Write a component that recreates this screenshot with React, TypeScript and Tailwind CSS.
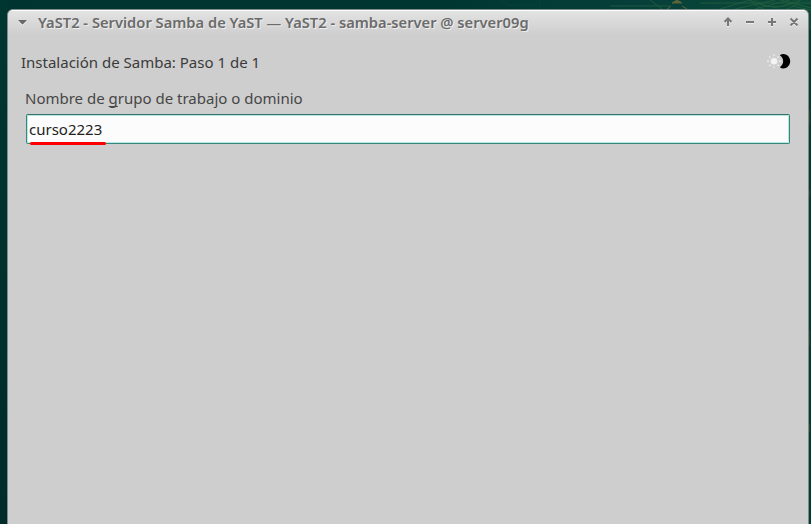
function Wallpaper() {
  return (
    <svg className="absolute inset-0" width="811" height="524" viewBox="0 0 811 524" fill="none">
      <defs>
        <linearGradient id="desk" x1="0" x2="1" y1="0" y2="0">
          <stop offset="0" stopColor="#003430" />
          <stop offset="0.55" stopColor="#003632" />
          <stop offset="0.8" stopColor="#06403a" />
          <stop offset="1" stopColor="#0b4a37" />
        </linearGradient>
        <linearGradient id="side" x1="0" x2="0" y1="0" y2="1">
          <stop offset="0" stopColor="#003632" />
          <stop offset="1" stopColor="#002b29" />
        </linearGradient>
      </defs>
      <rect width="811" height="524" fill="url(#desk)" />
      <rect width="8" height="524" fill="url(#side)" />
      <rect x="808" y="30" width="3" height="494" fill="#043c31" />
      <g stroke="#2a6542" strokeWidth="1" opacity="0.7">
        <circle cx="775" cy="-25" r="32" />
        <circle cx="775" cy="-25" r="36" />
        <circle cx="775" cy="-40" r="47" />
        <path d="M610 6h60M650 0l12 9M720 9l30-9M735 9l40-9M755 9l35-9M780 0l31 8M700 3h111M792 6l19 4" />
      </g>
      <path d="M500 0l8 5h32M540 0v9" stroke="#0b4a3f" opacity="0.5" />
      <path d="M672 3l5-3l5 3zM667 9l4-3M682 6l5 3" fill="#5c6338" stroke="#5b6338" strokeWidth="1" />
      <path d="M809.500 110v14M809.500 190v6M809.500 330v16M809.500 424v8" stroke="#1b4a31" />
    </svg>
  );
}

function TitleBar() {
  return (
    <header className="flex h-[24px] items-center bg-linear-to-b from-[#e3e3e3] to-[#cecece] pl-2.5 pr-[9px]">
      <svg width="9" height="6" viewBox="0 0 9 6" className="shrink-0">
        <path d="M0 1h9L4.500 6z" fill="#f1f1f1" />
        <path d="M0 0h9L4.500 4.700z" fill="#666a68" />
      </svg>
      <h1 className="mb-[2px] ml-[11px] grow whitespace-pre text-[14.700px] leading-[22px] font-semibold text-[#6b6b6b] [text-shadow:1px_1px_0_#eeeeee]">
        YaST2 - Servidor Samba de YaST — YaST2 - samba-server @ server09g
      </h1>
      <svg width="76" height="12" viewBox="0 0 76 12" fill="none" className="mb-[2px] shrink-0" strokeWidth="2">
        <g stroke="#eeeeee" transform="translate(0 1)">
          <path d="M5 10V3M1.500 6L5 2.500L8.500 6M23 6h8M45 6h8M49 2v8M67.500 2.500l7 7M74.500 2.500l-7 7" />
        </g>
        <path d="M5 10V3M1.500 6L5 2.500L8.500 6M23 6h8M45 6h8M49 2v8M67.500 2.500l7 7M74.500 2.500l-7 7" stroke="#777777" />
      </svg>
    </header>
  );
}

function DayNightIcon() {
  return (
    <svg width="24" height="16" viewBox="0 0 24 16" className="mb-[2px]">
      <circle cx="7" cy="8.200" r="3.300" fill="#f4f4f4" />
      <path
        d="M7 1.200v2M7 13.200v2M0 8.200h2M12 8.200h2M2.200 3.400l1.300 1.300M10.500 11.700l1.300 1.300M2.200 13l1.300-1.300M10.500 4.700l1.300-1.300"
        stroke="#ededed"
        strokeWidth="1.400"
      />
      <path d="M12.800 2.200C14 1.400 15.100 1 16.200 1C20.100 1 23.200 4.200 23.200 8.200S20.100 15.400 16.200 15.400C15 15.400 13.800 15 12.800 14.200C17.300 11.400 17.300 5 12.800 2.200z" fill="#000" />
    </svg>
  );
}

export default function App() {
  return (
    <div className="relative h-[524px] w-[811px] overflow-hidden pl-[7px] pt-[9px] font-['Noto_Sans',sans-serif]">
      <Wallpaper />
      <main className="relative h-[516px] w-[802px] overflow-hidden rounded-t-[6px] border border-b-0 border-[#7f8b88] bg-[#cecece]">
        <div className="h-px bg-white" />
        <TitleBar />
        <div className="flex items-center justify-between pl-[13px] pr-[17px] pt-[16px]">
          <p className="text-[15px] leading-[22px] text-[#3b3b3b]">Instalación de Samba: Paso 1 de 1</p>
          <DayNightIcon />
        </div>
        <div className="flex flex-col pl-[18px] pr-[18px] pt-[14px]">
          <label htmlFor="group" className="pl-px -ml-[2px] text-[15px] leading-[22px] text-[#464646]">
            Nombre de <span className="underline decoration-1 underline-offset-2 [text-decoration-skip-ink:none]">g</span>rupo de trabajo o dominio
          </label>
          <div className="relative mt-[5px]">
            <input
              id="group"
              defaultValue="curso2223"
              className="block h-[30px] w-full rounded-[2px] border border-[#37857b] border-t-[#376f69] bg-[#fcfcfc] pl-[2px] text-[15px] leading-[26px] text-[#222222] shadow-[inset_0_0_0_1px_#b5e8e1] outline-none"
            />
            <div className="absolute left-1 top-[28px] h-[3px] w-[76px] rounded-full bg-[#ff0000]" />
          </div>
        </div>
      </main>
    </div>
  );
}
